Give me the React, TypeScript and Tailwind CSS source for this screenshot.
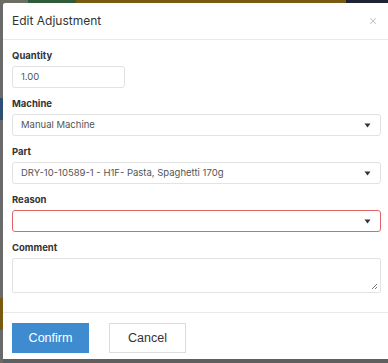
import { X } from "lucide-react";

const fields = [
  { label: "Machine", value: "Manual Machine" },
  { label: "Part", value: "DRY-10-10589-1 - H1F- Pasta, Spaghetti 170g" },
];

function Caret() {
  return (
    <svg width="7" height="5" viewBox="0 0 7 5" className="shrink-0">
      <path d="M0.5 0.5 L6.5 0.5 L3.5 4.5 Z" fill="#333" />
    </svg>
  );
}

function Label({ children }: { children: string }) {
  return <div className="h-[14px] leading-[14px] text-[9.5px] font-bold text-[#333] mb-[3px]">{children}</div>;
}

function Select({ value, invalid }: { value?: string; invalid?: boolean }) {
  return (
    <div
      className={`h-[22px] flex items-center justify-between pl-[8px] pr-[9px] rounded-[3px] border bg-white ${
        invalid ? "border-[#e06666]" : "border-[#e2e2e2]"
      }`}
    >
      <span className="text-[9.5px] text-[#555]">{value}</span>
      <Caret />
    </div>
  );
}

export default function App() {
  return (
    <div className="w-[388px] h-[363px] bg-[#5f5f5f] flex flex-col overflow-hidden" style={{ fontFamily: "Inter, 'Noto Sans', sans-serif" }}>
      {/* backdrop strip along the top */}
      <div className="h-[3px] flex shrink-0">
        <div className="w-[28px] bg-[#6b6e63]" />
        <div className="w-[48px] bg-[#2f5b3b]" />
        <div className="w-[270px] bg-[#7a5a12]" />
        <div className="flex-1 bg-[#1d2333]" />
      </div>
      <div className="flex flex-1 min-h-0">
        <div className="w-[3px] flex flex-col shrink-0">
          <div className="h-[95px] bg-[#6a6a6a]" />
          <div className="h-[22px] bg-[#2f4f74]" />
          <div className="h-[178px] bg-[#6a6a6a]" />
          <div className="h-[32px] bg-[#7a5a12]" />
          <div className="flex-1 bg-[#6a6a6a]" />
        </div>
        <div className="flex-1 h-[356px] bg-white flex flex-col rounded-tl-[2px]">
          {/* header */}
          <div className="h-[37px] flex items-center justify-between pl-[9px] pr-[10px] border-b border-[#e9e9e9]">
            <span className="text-[12px] text-[#333]">Edit Adjustment</span>
            <X size={10} strokeWidth={2.5} className="text-[#c4c4c4]" />
          </div>

          {/* body */}
          <div className="pt-[9px] pl-[9px] pr-[7px] pb-[19px] border-b border-[#e9e9e9]">
            <div className="mb-[9px]">
              <Label>Quantity</Label>
              <div className="w-[113px] h-[22px] flex items-center px-[8px] rounded-[3px] border border-[#e2e2e2] text-[9.5px] text-[#555]">
                1.00
              </div>
            </div>
            {fields.map((f) => (
              <div key={f.label} className="mb-[9px]">
                <Label>{f.label}</Label>
                <Select value={f.value} />
              </div>
            ))}
            <div className="mb-[9px]">
              <Label>Reason</Label>
              <Select invalid />
            </div>
            <div>
              <Label>Comment</Label>
              <div className="relative h-[35px] rounded-[2px] border border-[#e2e2e2]">
                <svg width="8" height="8" viewBox="0 0 8 8" className="absolute right-[2px] bottom-[2px]">
                  <path d="M7 2 L2 7 M7 5 L5 7" stroke="#777" strokeWidth="1" />
                </svg>
              </div>
            </div>
          </div>

          {/* footer */}
          <div className="flex gap-[20px] pt-[10px] pl-[9px]" style={{ fontFamily: "'Liberation Sans', Arial, sans-serif" }}>
            <button className="w-[77px] h-[30px] bg-[#3e8bcf] text-white text-[12.5px]">Confirm</button>
            <button className="w-[77px] h-[30px] bg-white border border-[#dcdcdc] text-[#333] text-[12.5px]">Cancel</button>
          </div>
        </div>
      </div>
    </div>
  );
}
